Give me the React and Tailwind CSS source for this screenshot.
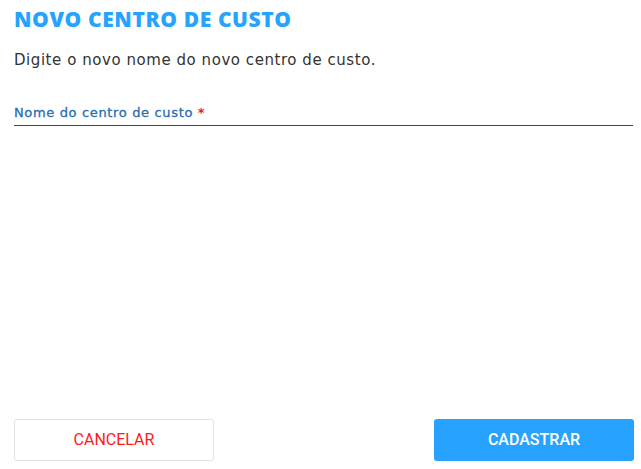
export default function App() {
  return (
    <div className="w-[641px] h-[469px] bg-white flex flex-col px-[14px] pt-[6px] pb-[8px]" style={{ fontFamily: '"DejaVu Sans", sans-serif' }}>
      <h1 className="text-[21px] leading-[26px] font-extrabold text-[#27a3ff] tracking-[0.6px]" style={{ fontFamily: '"Open Sans", sans-serif' }}>NOVO CENTRO DE CUSTO</h1>
      <p className="mt-[18px] text-[15px] leading-[20px] text-[#333333] tracking-[0.55px]">Digite o novo nome do novo centro de custo.</p>
      <div className="mt-[30px] border-b border-[#444444] w-[619px] pb-[1px]">
        <span className="text-[13px] leading-[18px] text-[#2a6db0] tracking-[0.65px]" style={{ WebkitTextStroke: '0.3px #2a6db0' }}>Nome do centro de custo </span>
        <span className="text-[13px] leading-[18px] font-bold text-[#e02020]">*</span>
      </div>
      <div className="flex-1" />
      <div className="flex justify-between w-[620px]" style={{ fontFamily: 'Roboto, sans-serif' }}>
        <button className="w-[200px] h-[42px] rounded-[3px] border border-[#e3e3e3] bg-white text-[#ff1a1a] text-[16px]">CANCELAR</button>
        <button className="w-[200px] h-[42px] rounded-[3px] bg-[#27a3ff] text-white text-[16px] font-medium">CADASTRAR</button>
      </div>
    </div>
  );
}
